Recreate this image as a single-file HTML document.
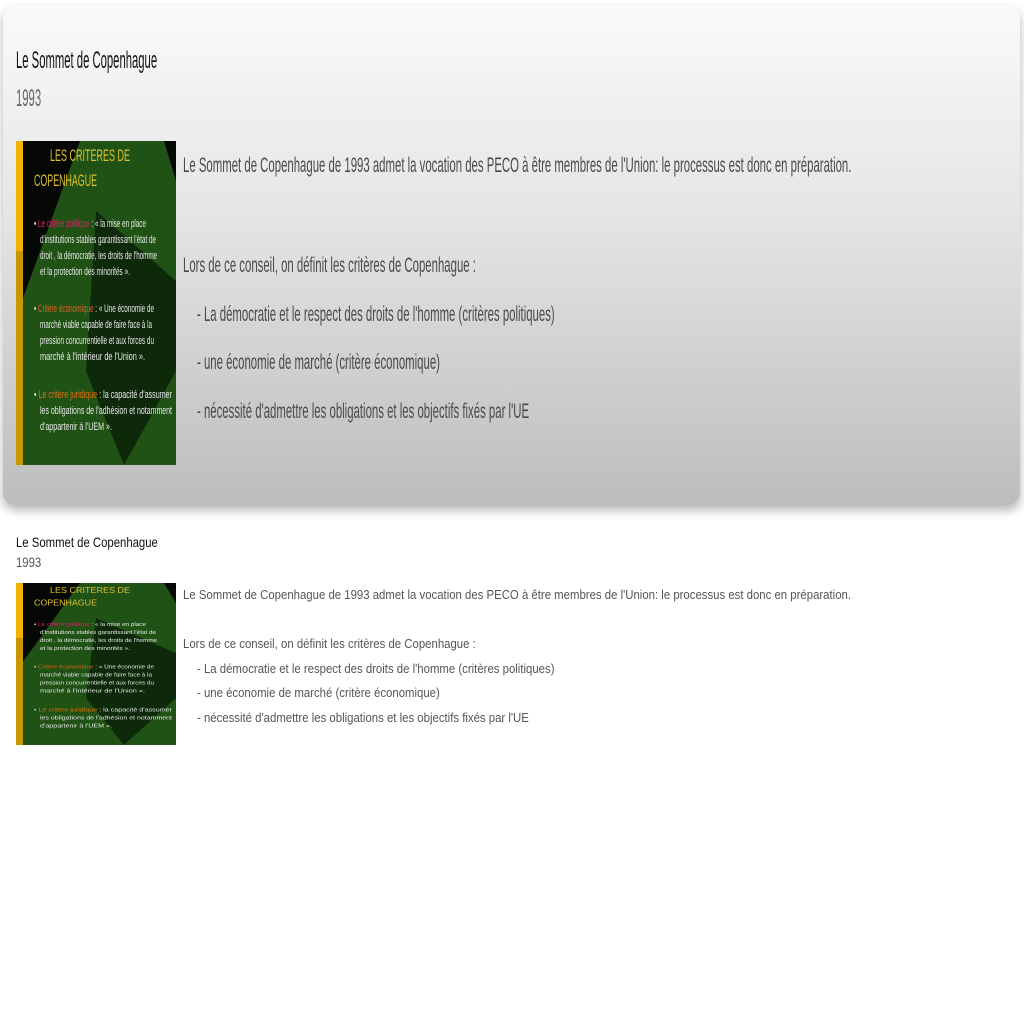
<!DOCTYPE html>
<html><head><meta charset="utf-8"><style>
body{margin:0;width:1024px;height:1024px;background:#fff;font-family:"Liberation Sans",sans-serif;position:relative;overflow:hidden}
.card{position:absolute;left:3px;top:6px;width:1017px;height:499px;border-radius:12px;background:linear-gradient(#fafafa,#e6e6e6 40%,#bdbdbd);box-shadow:0 5px 10px rgba(0,0,0,.3)}
.t{position:absolute;white-space:nowrap;transform-origin:0 50%;}
svg{position:absolute}
</style></head><body>
<svg width="0" height="0" style="position:absolute"><defs>
<g id="img">
<rect width="160" height="324" fill="#1f5214"/>
<polygon points="6,0 64,0 6,160" fill="#050805"/>
<polygon points="148,0 160,0 160,40" fill="#050805"/>
<polygon points="80,70 160,140 160,230 108,324 70,230" fill="#0a2208" opacity=".85"/>
<rect x="0" y="0" width="7" height="110" fill="#f2b400"/>
<rect x="0" y="110" width="7" height="214" fill="#c99700"/>
<g font-family="Liberation Sans,sans-serif" font-size="11" fill="#e8e8e8">
<text x="34" y="20" font-size="17" fill="#e0c030" textLength="80" lengthAdjust="spacingAndGlyphs">LES CRITERES DE</text>
<text x="18" y="45" font-size="17" fill="#e0c030" textLength="63" lengthAdjust="spacingAndGlyphs">COPENHAGUE</text>
<text x="18" y="86" textLength="112" lengthAdjust="spacingAndGlyphs">• <tspan fill="#e0206a">Le critère politique</tspan> : « la mise en place</text>
<text x="24" y="102" textLength="116" lengthAdjust="spacingAndGlyphs">d'institutions stables garantissant l'état de</text>
<text x="24" y="118" textLength="117" lengthAdjust="spacingAndGlyphs">droit , la démocratie, les droits de l'homme</text>
<text x="24" y="134" textLength="90" lengthAdjust="spacingAndGlyphs">et la protection des minorités ».</text>
<text x="18" y="171" textLength="120" lengthAdjust="spacingAndGlyphs">• <tspan fill="#e06020">Critère économique</tspan> : « Une économie de</text>
<text x="24" y="187" textLength="112" lengthAdjust="spacingAndGlyphs">marché viable capable de faire face à la</text>
<text x="24" y="203" textLength="114" lengthAdjust="spacingAndGlyphs">pression concurrentielle et aux forces du</text>
<text x="24" y="219" textLength="105" lengthAdjust="spacingAndGlyphs">marché à l'intérieur de l'Union ».</text>
<text x="18" y="257" textLength="138" lengthAdjust="spacingAndGlyphs">• <tspan fill="#e07010">Le critère juridique</tspan> : la capacité d'assumer</text>
<text x="24" y="273" textLength="132" lengthAdjust="spacingAndGlyphs">les obligations de l'adhésion et notamment</text>
<text x="24" y="289" textLength="72" lengthAdjust="spacingAndGlyphs">d'appartenir à l'UEM ».</text>
</g></g></defs></svg>
<div class="card"></div>
<div class="t" style="left:16px;top:47px;font-size:24px;color:#111;transform:scaleX(.47)">Le Sommet de Copenhague</div>
<div class="t" style="left:16px;top:85px;font-size:24px;color:#666;transform:scaleX(.47)">1993</div>
<svg style="left:16px;top:141px" width="160" height="324" viewBox="0 0 160 324" preserveAspectRatio="none"><use href="#img"/></svg>
<div style="color:#4a4a4a;font-size:21px">
<div class="t" style="left:183px;top:154px;transform:scaleX(.542)">Le Sommet de Copenhague de 1993 admet la vocation des PECO à être membres de l'Union: le processus est donc en préparation.</div>
<div class="t" style="left:183px;top:254px;transform:scaleX(.542)">Lors de ce conseil, on définit les critères de Copenhague :</div>
<div class="t" style="left:197px;top:303px;transform:scaleX(.542)">- La démocratie et le respect des droits de l'homme (critères politiques)</div>
<div class="t" style="left:197px;top:351px;transform:scaleX(.542)">- une économie de marché (critère économique)</div>
<div class="t" style="left:197px;top:400px;transform:scaleX(.542)">- nécessité d'admettre les obligations et les objectifs fixés par l'UE</div>
</div>
<div class="t" style="left:16px;top:534px;font-size:14px;color:#111;transform:scaleX(.81)">Le Sommet de Copenhague</div>
<div class="t" style="left:16px;top:554px;font-size:14px;color:#555;transform:scaleX(.81)">1993</div>
<svg style="left:16px;top:583px" width="160" height="162" viewBox="0 0 160 324" preserveAspectRatio="none"><use href="#img"/></svg>
<div style="color:#555;font-size:13px">
<div class="t" style="left:183px;top:587px;transform:scaleX(.875)">Le Sommet de Copenhague de 1993 admet la vocation des PECO à être membres de l'Union: le processus est donc en préparation.</div>
<div class="t" style="left:183px;top:636px;transform:scaleX(.875)">Lors de ce conseil, on définit les critères de Copenhague :</div>
<div class="t" style="left:197px;top:661px;transform:scaleX(.875)">- La démocratie et le respect des droits de l'homme (critères politiques)</div>
<div class="t" style="left:197px;top:685px;transform:scaleX(.875)">- une économie de marché (critère économique)</div>
<div class="t" style="left:197px;top:710px;transform:scaleX(.875)">- nécessité d'admettre les obligations et les objectifs fixés par l'UE</div>
</div>
</body></html>
